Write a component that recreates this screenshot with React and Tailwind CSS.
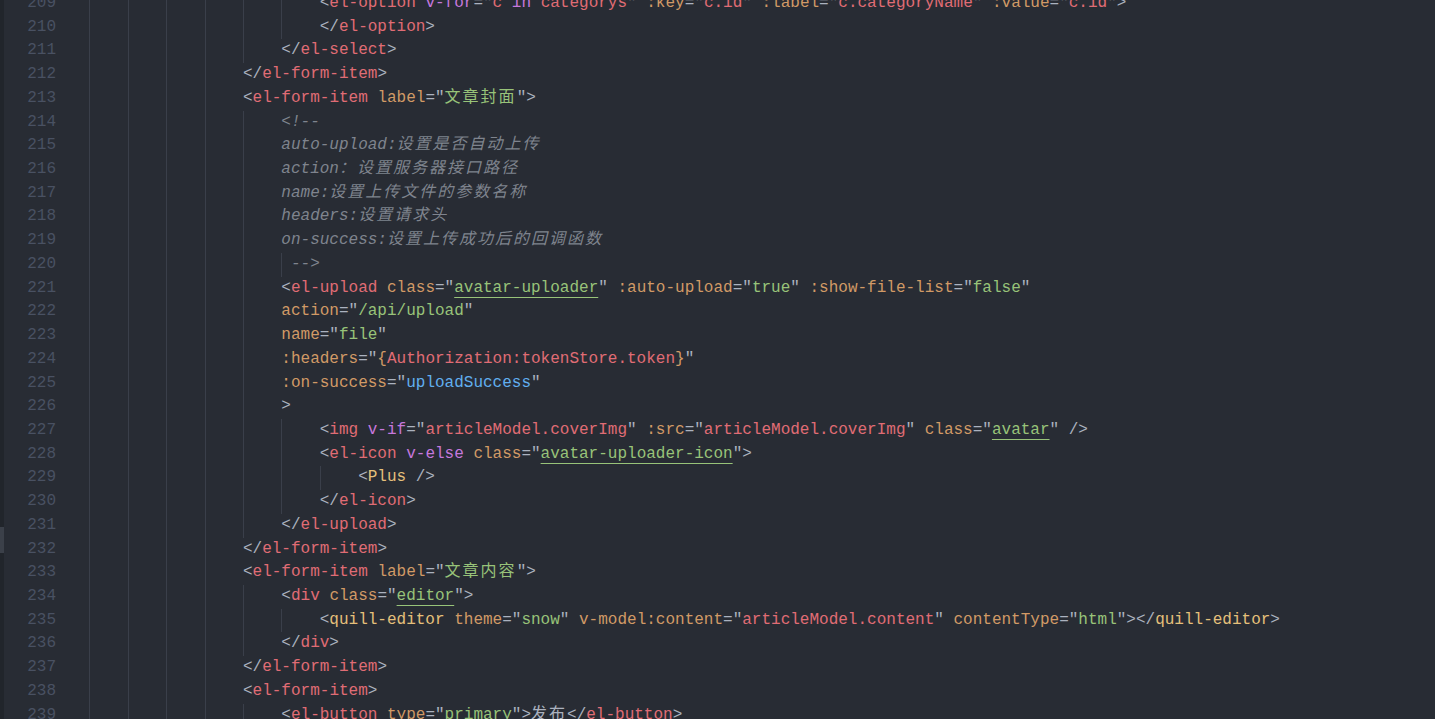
import React from "react";

const C = {
  p: "text-[#abb2bf]",
  t: "text-[#e06c75]",
  a: "text-[#d19a66]",
  s: "text-[#98c379]",
  u: "text-[#98c379] underline decoration-[#98c379] underline-offset-[5px]",
  v: "text-[#e06c75]",
  k: "text-[#c678dd]",
  c: "text-[#7f848e] italic",
  y: "text-[#e5c07b]",
  b: "text-[#61afef]",
  w: "text-[#abb2bf]",
};

const lines = [
  [209, 24, [["p", "<"], ["t", "el-option"], ["w", " "], ["k", "v-for"], ["p", "=\""], ["v", "c"], ["w", " "], ["k", "in"], ["w", " "], ["v", "categorys"], ["p", "\""], ["w", " "], ["a", ":key"], ["p", "=\""], ["v", "c.id"], ["p", "\""], ["w", " "], ["a", ":label"], ["p", "=\""], ["v", "c.categoryName"], ["p", "\""], ["w", " "], ["a", ":value"], ["p", "=\""], ["v", "c.id"], ["p", "\">"]]],
  [210, 24, [["p", "</"], ["t", "el-option"], ["p", ">"]]],
  [211, 20, [["p", "</"], ["t", "el-select"], ["p", ">"]]],
  [212, 16, [["p", "</"], ["t", "el-form-item"], ["p", ">"]]],
  [213, 16, [["p", "<"], ["t", "el-form-item"], ["w", " "], ["a", "label"], ["p", "=\""], ["s", "文章封面"], ["p", "\">"]]],
  [214, 20, [["c", "<!--"]]],
  [215, 20, [["c", "auto-upload:设置是否自动上传"]]],
  [216, 20, [["c", "action：设置服务器接口路径"]]],
  [217, 20, [["c", "name:设置上传文件的参数名称"]]],
  [218, 20, [["c", "headers:设置请求头"]]],
  [219, 20, [["c", "on-success:设置上传成功后的回调函数"]]],
  [220, 21, [["c", "-->"]]],
  [221, 20, [["p", "<"], ["t", "el-upload"], ["w", " "], ["a", "class"], ["p", "=\""], ["u", "avatar-uploader"], ["p", "\""], ["w", " "], ["a", ":auto-upload"], ["p", "=\""], ["s", "true"], ["p", "\""], ["w", " "], ["a", ":show-file-list"], ["p", "=\""], ["s", "false"], ["p", "\""]]],
  [222, 20, [["a", "action"], ["p", "=\""], ["s", "/api/upload"], ["p", "\""]]],
  [223, 20, [["a", "name"], ["p", "=\""], ["s", "file"], ["p", "\""]]],
  [224, 20, [["a", ":headers"], ["p", "=\""], ["a", "{"], ["v", "Authorization:tokenStore.token"], ["a", "}"], ["p", "\""]]],
  [225, 20, [["a", ":on-success"], ["p", "=\""], ["b", "uploadSuccess"], ["p", "\""]]],
  [226, 20, [["p", ">"]]],
  [227, 24, [["p", "<"], ["t", "img"], ["w", " "], ["k", "v-if"], ["p", "=\""], ["v", "articleModel.coverImg"], ["p", "\""], ["w", " "], ["a", ":src"], ["p", "=\""], ["v", "articleModel.coverImg"], ["p", "\""], ["w", " "], ["a", "class"], ["p", "=\""], ["u", "avatar"], ["p", "\""], ["w", " "], ["p", "/>"]]],
  [228, 24, [["p", "<"], ["t", "el-icon"], ["w", " "], ["k", "v-else"], ["w", " "], ["a", "class"], ["p", "=\""], ["u", "avatar-uploader-icon"], ["p", "\">"]]],
  [229, 28, [["p", "<"], ["y", "Plus"], ["w", " "], ["p", "/>"]]],
  [230, 24, [["p", "</"], ["t", "el-icon"], ["p", ">"]]],
  [231, 20, [["p", "</"], ["t", "el-upload"], ["p", ">"]]],
  [232, 16, [["p", "</"], ["t", "el-form-item"], ["p", ">"]]],
  [233, 16, [["p", "<"], ["t", "el-form-item"], ["w", " "], ["a", "label"], ["p", "=\""], ["s", "文章内容"], ["p", "\">"]]],
  [234, 20, [["p", "<"], ["t", "div"], ["w", " "], ["a", "class"], ["p", "=\""], ["u", "editor"], ["p", "\">"]]],
  [235, 24, [["p", "<"], ["y", "quill-editor"], ["w", " "], ["a", "theme"], ["p", "=\""], ["s", "snow"], ["p", "\""], ["w", " "], ["a", "v-model:content"], ["p", "=\""], ["v", "articleModel.content"], ["p", "\""], ["w", " "], ["a", "contentType"], ["p", "=\""], ["s", "html"], ["p", "\"></"], ["y", "quill-editor"], ["p", ">"]]],
  [236, 20, [["p", "</"], ["t", "div"], ["p", ">"]]],
  [237, 16, [["p", "</"], ["t", "el-form-item"], ["p", ">"]]],
  [238, 16, [["p", "<"], ["t", "el-form-item"], ["p", ">"]]],
  [239, 20, [["p", "<"], ["t", "el-button"], ["w", " "], ["a", "type"], ["p", "=\""], ["s", "primary"], ["p", "\">"], ["w", "发布"], ["p", "</"], ["t", "el-button"], ["p", ">"]]],
];

function splitCJK(text) {
  const parts = [];
  const re = /[\u3000-\u9fff\uff00-\uffef]+/g;
  let last = 0;
  let m;
  while ((m = re.exec(text)) !== null) {
    if (m.index > last) parts.push([false, text.slice(last, m.index)]);
    parts.push([true, m[0]]);
    last = m.index + m[0].length;
  }
  if (last < text.length) parts.push([false, text.slice(last)]);
  return parts;
}

function Token({ kind, text }) {
  return (
    <span className={C[kind]}>
      {splitCJK(text).map(([cjk, s], i) =>
        cjk ? (
          <span key={i} className="tracking-[2px]">
            {s}
          </span>
        ) : (
          <React.Fragment key={i}>{s}</React.Fragment>
        )
      )}
    </span>
  );
}

function Guides({ indent }) {
  const n = Math.ceil(indent / 4);
  const out = [];
  for (let i = 0; i < n; i++) {
    const cols = Math.min(4, indent - i * 4);
    out.push(
      <span
        key={i}
        className={
          cols === 4
            ? "shrink-0 w-[38.4px] border-l border-[#3a3f4a]"
            : "shrink-0 w-[9.6px] border-l border-[#3a3f4a]"
        }
      />
    );
  }
  return out;
}

export default function App() {
  return (
    <div
      className="flex w-full h-[719px] overflow-hidden bg-[#282c34] text-[16px] text-[#abb2bf]"
      style={{ fontFamily: '"Liberation Mono", "Noto Sans CJK SC", monospace' }}
    >
      <div className="w-[4px] shrink-0 bg-[#21252b] flex flex-col">
        <div className="mt-[527px] h-[26px] bg-[#3b4049]" />
      </div>
      <div className="flex flex-col mt-[-8px] flex-1">
        {lines.map(([num, indent, tokens]) => (
          <div key={num} className="flex h-[23.72px] leading-[23.72px] shrink-0">
            <div className="w-[85.4px] pr-[33.4px] text-right text-[#495162] shrink-0">
              {num}
            </div>
            <div className="flex items-stretch">
              <Guides indent={indent} />
            </div>
            <div className="whitespace-pre">
              {tokens.map(([k, t], i) => (
                <Token key={i} kind={k} text={t} />
              ))}
            </div>
          </div>
        ))}
      </div>
    </div>
  );
}
